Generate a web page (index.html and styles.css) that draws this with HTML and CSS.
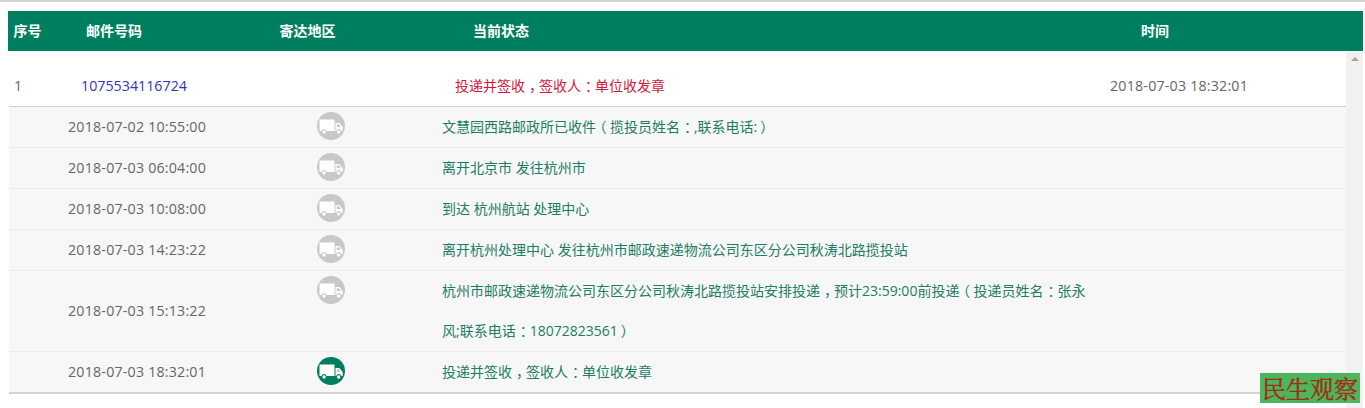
FILE: index.html
```html
<!DOCTYPE html>
<html lang="zh">
<head>
<meta charset="utf-8">
<title>邮件查询</title>
<link rel="stylesheet" href="styles.css">
</head>
<body>
<svg class="defs" width="0" height="0" aria-hidden="true">
  <symbol id="truck" viewBox="0 0 28 28">
    <path fill="#fff" d="M2.5 7.5h15v11.5H9.6a2.6 2.6 0 0 0-5 0H2.5zM18.5 11h3.8l3.4 4v4h-1.5a2.6 2.6 0 0 0-5 0h-.7z"/>
    <path class="cab" d="M19.8 12.3h2.1l2 2.6h-4.1z"/>
    <circle fill="#fff" cx="7.1" cy="20" r="1.7"/>
    <circle fill="#fff" cx="21.7" cy="20" r="1.7"/>
  </symbol>
</svg>
<div class="top-line"></div>
<main class="panel">
  <div class="head">
    <span class="h-no">序号</span>
    <span class="h-code">邮件号码</span>
    <span class="h-area">寄达地区</span>
    <span class="h-state">当前状态</span>
    <span class="h-time">时间</span>
  </div>
  <div class="scroll">
    <div class="content">
      <div class="summary">
        <span class="s-no">1</span>
        <span class="s-code">1075534116724</span>
        <span class="s-state">投递并签收<i class="pc">，</i>签收人<i class="pc">：</i>单位收发章</span>
        <span class="s-time">2018-07-03 18:32:01</span>
      </div>
      <div class="track">
        <div class="row"><span class="time">2018-07-02 10:55:00</span><span class="dot"><svg class="truck"><use href="#truck"/></svg></span><span class="text">文慧园西路邮政所已收件<i class="po">（</i>揽投员姓名<i class="pc">：</i>,联系电话:<i class="pe">）</i></span></div>
        <div class="row"><span class="time">2018-07-03 06:04:00</span><span class="dot"><svg class="truck"><use href="#truck"/></svg></span><span class="text">离开北京市 发往杭州市</span></div>
        <div class="row"><span class="time">2018-07-03 10:08:00</span><span class="dot"><svg class="truck"><use href="#truck"/></svg></span><span class="text">到达 杭州航站 处理中心</span></div>
        <div class="row"><span class="time">2018-07-03 14:23:22</span><span class="dot"><svg class="truck"><use href="#truck"/></svg></span><span class="text">离开杭州处理中心 发往杭州市邮政速递物流公司东区分公司秋涛北路揽投站</span></div>
        <div class="row"><span class="time">2018-07-03 15:13:22</span><span class="dot"><svg class="truck"><use href="#truck"/></svg></span><span class="text"><span class="line">杭州市邮政速递物流公司东区分公司秋涛北路揽投站安排投递<i class="pc">，</i>预计23:59:00前投递<i class="po">（</i>投递员姓名<i class="pc">：</i>张永</span><span class="line">风;联系电话<i class="pc">：</i>18072823561<i class="pe">）</i></span></span></div>
        <div class="row last"><span class="time">2018-07-03 18:32:01</span><span class="dot on"><svg class="truck"><use href="#truck"/></svg></span><span class="text">投递并签收<i class="pc">，</i>签收人<i class="pc">：</i>单位收发章</span></div>
      </div>
    </div>
    <div class="scrollbar"><span class="arrow"></span></div>
  </div>
</main>
<div class="mark">民生观察</div>
</body>
</html>
```
FILE: styles.css
```css
html, body { margin: 0; padding: 0; height: 408px; overflow: hidden; background: #fff; }
body { font: 14px/20px "Open Sans", "Noto Sans CJK SC", sans-serif; color: #666; position: relative; }
i { font-style: normal; }
.pc { margin-left: 4px; letter-spacing: -4px; }
.po { font-feature-settings: "halt"; margin: 0 3.5px; }
.pe { margin-left: 3px; letter-spacing: -3px; }
.line { display: block; }
.defs { position: absolute; }
.top-line { height: 2px; background: #d2d4d4; }
.panel { margin: 9px 2px 0 8px; }
.head { display: flex; align-items: center; height: 40px; background: #007f60; color: #fff; font-weight: 700; font-size: 14px; }
.head span { flex: none; }
.h-no { margin-left: 5.5px; width: 72.5px; }
.h-code { width: 193.5px; }
.h-area { width: 193.5px; }
.h-state { width: 668px; }
.scroll { display: flex; height: 357px; }
.content { flex: 1; min-width: 0; padding-left: 1px; }
.scrollbar { width: 17px; background: #f1f1f1; display: flex; justify-content: center; padding-top: 6px; box-sizing: border-box; }
.arrow { width: 0; height: 0; border: 4px solid transparent; border-top: 0; border-bottom: 4px solid #a3a3a3; }
.summary { display: flex; align-items: center; height: 56px; padding-top: 14px; box-sizing: border-box; border-bottom: 1px solid #cfcfcf; }
.summary span { flex: none; }
.s-no { margin-left: 5px; width: 67px; font-size: 14.25px; }
.s-code { width: 374px; color: #3333bb; font-size: 14.25px; }
.s-state { width: 655px; color: #d4173a; }
.s-time { font-size: 14.25px; letter-spacing: 0.19px; }
.track { background: #f7f7f7; border-bottom: 2px solid #d4d4d4; }
.row { display: grid; grid-template-columns: 248px 185px 648px; align-items: center; border-bottom: 1px solid #ececec; }
.row.last { border-bottom: 0; }
.time { padding-left: 59px; font-size: 14.25px; letter-spacing: 0.19px; }
.dot { justify-self: start; align-self: start; margin: 5px 0 0 60px; width: 28px; height: 28px; border-radius: 50%; background: #c8c8c8; display: block; }
.dot.on { background: #007f60; }
.truck { display: block; width: 28px; height: 28px; }
.cab { fill: #c8c8c8; }
.dot.on .cab { fill: #007f60; }
.text { color: #1c7d62; line-height: 40px; }
.mark { position: absolute; left: 1260px; top: 373px; width: 100px; height: 30px; background: #4db55d; color: #a32c12; font: 24px/30px "Noto Serif CJK SC", "Noto Sans CJK SC", serif; text-align: center; -webkit-text-stroke: 0.4px #a32c12; }
```
